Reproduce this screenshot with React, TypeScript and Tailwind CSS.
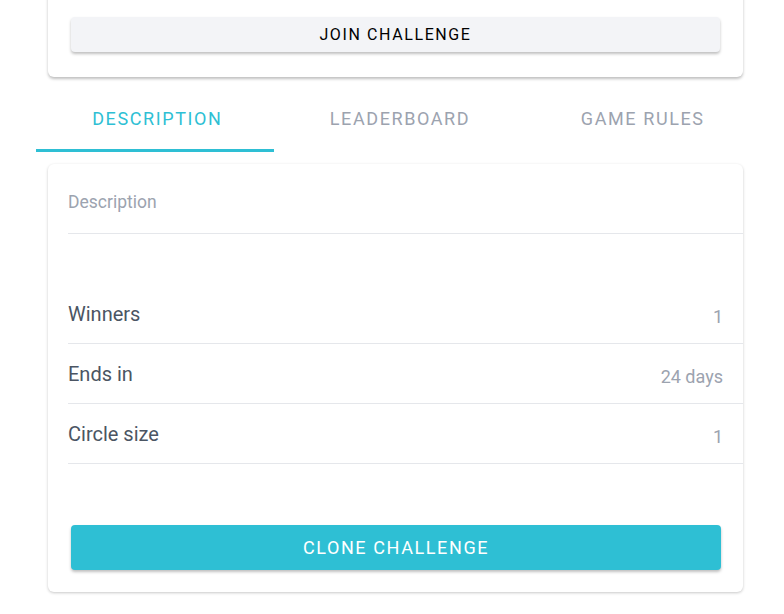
import { useState } from "react";

const tabs = ["Description", "Leaderboard", "Game rules"];

const stats = [
  { label: "Winners", value: "1" },
  { label: "Ends in", value: "24 days" },
  { label: "Circle size", value: "1" },
];

export default function App() {
  const [active, setActive] = useState(0);

  return (
    <div className="min-h-[614px] bg-white font-['Roboto',sans-serif] overflow-hidden">
      {/* Join card */}
      <div className="mx-[48px] w-[695px] -mt-3 pt-[29px] pb-[25px] px-[23px] bg-white rounded-md shadow-[0_2px_3px_rgba(0,0,0,0.25)]">
        <button className="w-full h-[35px] pt-px rounded bg-[#f3f4f7] text-black text-[16px] tracking-[1.6px] shadow-[0_2px_3px_rgba(0,0,0,0.25)]">
          JOIN CHALLENGE
        </button>
      </div>

      {/* Tabs */}
      <div className="ml-[36px] w-[728px] mt-[13px] flex">
        {tabs.map((t, i) => (
          <button
            key={t}
            onClick={() => setActive(i)}
            className={`flex-1 h-[62px] pb-[6px] flex flex-col items-center justify-center relative uppercase text-[18px] tracking-[1.6px] ${
              i === active ? "text-[#2ebfd4]" : "text-[#9ca3af]"
            }`}
          >
            {t}
            {i === active && (
              <span className="absolute left-0 bottom-0 w-[238px] h-[3px] bg-[#2ebfd4]" />
            )}
          </button>
        ))}
      </div>

      {/* Details card */}
      <div className="mx-[48px] w-[695px] mt-[12px] bg-white rounded-md shadow-[0_1px_3px_rgba(0,0,0,0.22)] pl-[20px] pt-[26px] pb-[22px]">
        <div className="border-b border-[#e5e7eb] pb-[18px] text-[17.5px] text-[#9ca3af] leading-[25px]">
          Description
        </div>
        <div className="mt-[50px]">
          {stats.map((s) => (
            <div
              key={s.label}
              className="h-[60px] border-b border-[#e5e7eb] flex items-center justify-between pr-[20px]"
            >
              <span className="text-[20px] text-[#4b5563] mt-[1px]">{s.label}</span>
              <span className="text-[18px] text-[#9ca3af] mt-[6px]">{s.value}</span>
            </div>
          ))}
        </div>
        <div className="pr-[22px] pl-[3px] mt-[61px]">
          <button className="w-full h-[45px] rounded bg-[#2ebfd4] text-white text-[18px] tracking-[1.6px] shadow-[0_2px_3px_rgba(0,0,0,0.25)]">
            CLONE CHALLENGE
          </button>
        </div>
      </div>
    </div>
  );
}
